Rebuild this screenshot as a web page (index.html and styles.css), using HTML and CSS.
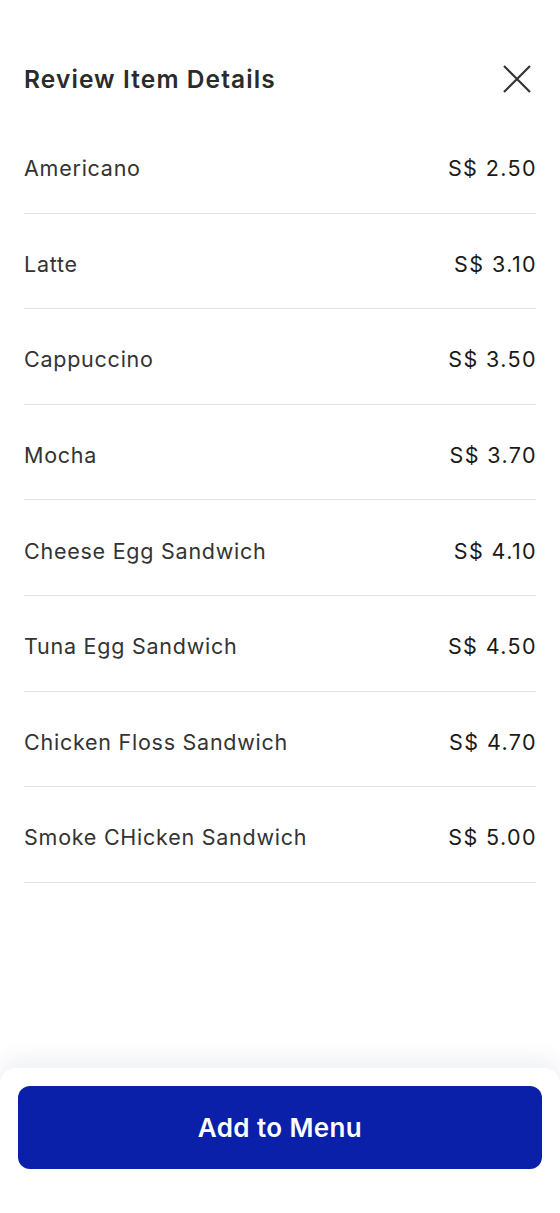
FILE: index.html
```html
<!DOCTYPE html>
<html lang="en">

<head>
    <meta charset="UTF-8">
    <meta name="viewport" content="width=device-width, initial-scale=1.0">
    <title>Review Item Details</title>
    <link rel="stylesheet" href="styles.css">
</head>

<body>
    <div class="page">
        <div class="header">
            <h1 class="title">Review Item Details</h1>
            <button class="close_btn" aria-label="Close">
                <svg width="30" height="30" viewBox="0 0 30 30">
                    <path d="M2 2 L28 28 M28 2 L2 28" stroke="#333333" stroke-width="2.2" fill="none" />
                </svg>
            </button>
        </div>

        <ul class="item_list">
            <li class="item"><span class="item_name">Americano</span><span class="item_price">S$ 2.50</span></li>
            <li class="item"><span class="item_name">Latte</span><span class="item_price">S$ 3.10</span></li>
            <li class="item"><span class="item_name">Cappuccino</span><span class="item_price">S$ 3.50</span></li>
            <li class="item"><span class="item_name">Mocha</span><span class="item_price">S$ 3.70</span></li>
            <li class="item"><span class="item_name">Cheese Egg Sandwich</span><span class="item_price">S$ 4.10</span></li>
            <li class="item"><span class="item_name">Tuna Egg Sandwich</span><span class="item_price">S$ 4.50</span></li>
            <li class="item"><span class="item_name">Chicken Floss Sandwich</span><span class="item_price">S$ 4.70</span></li>
            <li class="item"><span class="item_name">Smoke CHicken Sandwich</span><span class="item_price">S$ 5.00</span></li>
        </ul>

        <div class="footer">
            <button class="add_btn">Add to Menu</button>
        </div>
    </div>
</body>

</html>
```

FILE: styles.css
```css
* {
    box-sizing: border-box;
}

body,
html {
    margin: 0;
    padding: 0;
    height: 100%;
    width: 100%;
    font-family: Inter, "Noto Sans", sans-serif;
    background-color: #ffffff;
    overflow: hidden;
}

.page {
    display: flex;
    flex-direction: column;
    height: 100vh;
}

.header {
    display: flex;
    align-items: center;
    justify-content: space-between;
    padding: 61px 24px 21px 24px;
}

.title {
    margin: 0;
    font-size: 24.5px;
    line-height: 36px;
    font-weight: 600;
    letter-spacing: 1.1px;
    color: #2b2b2b;
}

.close_btn {
    display: flex;
    padding: 0;
    margin-right: 4px;
    border: none;
    background: none;
    cursor: pointer;
}

.item_list {
    list-style: none;
    margin: 0 24px;
    padding: 0;
}

.item {
    display: flex;
    align-items: center;
    justify-content: space-between;
    height: 95.6px;
    border-bottom: 1.5px solid #e3e3e3;
    font-size: 21.5px;
    padding-top: 6px;
}

.item_name {
    color: #333333;
    letter-spacing: 0.75px;
}

.item_price {
    color: #1a1a1a;
    letter-spacing: 1.4px;
    margin-right: -1px;
}

.footer {
    margin-top: auto;
    height: 145px;
    padding: 18px 18px 44px 18px;
    background-color: #ffffff;
    border-radius: 16px 16px 0 0;
    box-shadow: 0 -8px 24px rgba(20, 30, 80, 0.07);
}

.add_btn {
    width: 100%;
    height: 83px;
    border: none;
    border-radius: 12px;
    background-color: #0b20a8;
    color: #ffffff;
    font-family: Inter, "Noto Sans", sans-serif;
    font-size: 26px;
    font-weight: 600;
    letter-spacing: 0.4px;
    cursor: pointer;
}
```
